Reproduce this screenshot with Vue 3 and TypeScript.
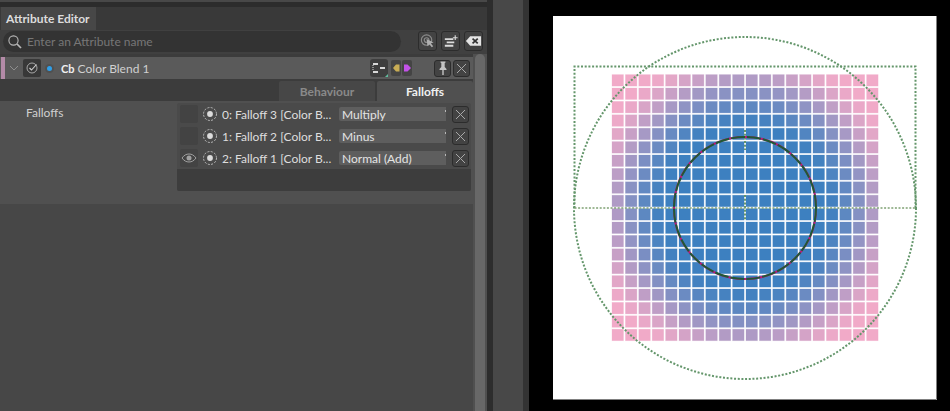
<script setup lang="ts">
interface FalloffRow {
  label: string;
  mode: string;
  visible: boolean;
}

const rows: FalloffRow[] = [
  { label: '0: Falloff 3 [Color B...', mode: 'Multiply', visible: false },
  { label: '1: Falloff 2 [Color B...', mode: 'Minus', visible: false },
  { label: '2: Falloff 1 [Color B...', mode: 'Normal (Add)', visible: true },
];

const CENTER_X = 745;
const CENTER_Y = 208;
const PITCH = 13.4;
const CELL = 11.5;
const ORIGIN_X = 612;
const ORIGIN_Y = 74.6;

const blue = [61, 128, 192];
const pink = [241, 170, 200];

function cellColor(d: number): string {
  const n = Math.min(1, Math.max(0, (d - 78) / 84));
  const t = n * n * (3 - 2 * n);
  const c = blue.map((b, i) => Math.round(b + (pink[i] - b) * t));
  return `rgb(${c[0]},${c[1]},${c[2]})`;
}

const cells: { x: number; y: number; fill: string }[] = [];
for (let r = 0; r < 20; r++) {
  for (let c = 0; c < 20; c++) {
    const x = ORIGIN_X + c * PITCH;
    const y = ORIGIN_Y + r * PITCH;
    const d = Math.hypot(x + CELL / 2 - CENTER_X, y + CELL / 2 - CENTER_Y);
    cells.push({ x, y, fill: cellColor(d) });
  }
}
</script>

<template>
  <div class="app">
    <section class="editor">
      <div class="topline"></div>
      <div class="topgap"></div>
      <div class="tabbar">
        <div class="tab">Attribute Editor</div>
      </div>
      <div class="searchrow">
        <div class="search">
          <svg class="search-icon" width="16" height="16" viewBox="0 0 16 16">
            <circle cx="6.5" cy="6.5" r="4.6" fill="none" stroke="#b8b8b8" stroke-width="1.1" />
            <path d="M10 10l4 4" stroke="#b8b8b8" stroke-width="1.7" />
          </svg>
          <span class="search-text">Enter an Attribute name</span>
        </div>
        <div class="search-buttons">
          <button class="btn btn-search">
            <svg width="18" height="18" viewBox="0 0 18 18">
              <circle cx="8" cy="8" r="5.5" fill="none" stroke="#8c8c8c" stroke-width="1.2" />
              <circle cx="8" cy="8" r="2.5" fill="none" stroke="#8c8c8c" stroke-width="1.2" />
              <path d="M8 7l7.5 3.5-3 1 2.500 3-1.500 1-2.500-3-2 2z" fill="#b0b0b0" />
            </svg>
          </button>
          <button class="btn btn-search">
            <svg width="18" height="18" viewBox="0 0 18 18">
              <path d="M3 6h9v2H3zM5 9.500h8v2H5zM3 13h9v2H3z" fill="#dcdcdc" />
              <path d="M14 3v5M11.500 5.500h5" stroke="#dcdcdc" stroke-width="1.200" />
            </svg>
          </button>
          <button class="btn btn-search">
            <svg width="18" height="18" viewBox="0 0 18 18">
              <path d="M5.500 4H17v10H5.500L1 9z" fill="#e4e4e4" />
              <path d="M8 6.500l5.500 5M13.500 6.500L8 11.500" stroke="#333" stroke-width="1.800" />
            </svg>
          </button>
        </div>
      </div>

      <div class="body">
        <div class="main">
          <div class="head">
            <header class="node">
              <span class="node-strip"></span>
              <svg class="chevron" width="10" height="6" viewBox="0 0 10 6">
                <path d="M1 1l4 4 4-4" fill="none" stroke="#8e8e8e" stroke-width="1" />
              </svg>
              <span class="check">
                <svg width="14" height="14" viewBox="0 0 14 14">
                  <circle cx="7" cy="7" r="5" fill="none" stroke="#a8a8a8" stroke-width="1" />
                  <path d="M4.500 7l2 2 5-5.500" fill="none" stroke="#d0d0d0" stroke-width="1.100" />
                </svg>
              </span>
              <span class="dot"></span>
              <span class="node-name"><b>Cb</b> Color Blend 1</span>
              <span class="node-tools">
                <span class="tool-graph">
                  <svg width="18" height="18" viewBox="0 0 18 18">
                    <path d="M3 4h5v2H3zM3 12h5v2H3zM10 8h5v2h-5z" fill="#d8d8d8" />
                    <path d="M3 6v6" stroke="#d8d8d8" stroke-width="1" stroke-dasharray="1 1" />
                    <path d="M18 15v3h-3z" fill="#5fbf9f" />
                  </svg>
                </span>
                <span class="tool-flow">
                  <svg width="10" height="16" viewBox="0 0 10 16">
                    <path d="M8.500 4.500v7H5L2 8l3-3.500z" fill="#c9ad55" />
                  </svg>
                </span>
                <span class="tool-flow">
                  <svg width="10" height="16" viewBox="0 0 10 16">
                    <path d="M2 4.500v7h3.500L9 8 5.500 4.500z" fill="#c252e8" />
                  </svg>
                </span>
              </span>
              <span class="node-actions">
                <button class="btn btn-small">
                  <svg width="14" height="16" viewBox="0 0 14 16">
                    <path d="M4.500 1.500h5v1l-.8.6V7l1.800 2v1h-7V9l1.800-2V3.100l-.8-.6z" fill="#c4c4c4" />
                    <path d="M7 10v5" stroke="#c4c4c4" stroke-width="1.400" />
                  </svg>
                </button>
                <button class="btn btn-small">
                  <svg width="11" height="11" viewBox="0 0 11 11">
                    <path d="M1 1l9 9M10 1l-9 9" stroke="#a8a8a8" stroke-width="1" />
                  </svg>
                </button>
              </span>
            </header>

            <nav class="tabs">
              <div class="pane-tab">Behaviour</div>
              <div class="pane-tab pane-tab--active">Falloffs</div>
            </nav>
          </div>

          <div class="props">
            <div class="prop-label">Falloffs</div>
            <div class="list">
              <div v-for="row in rows" :key="row.label" class="row">
                <span class="eye">
                  <svg v-if="row.visible" width="16" height="10" viewBox="0 0 16 10">
                    <path d="M1 5c2-2.800 4.300-4 7-4s5 1.200 7 4c-2 2.800-4.300 4-7 4S3 7.800 1 5z" fill="none" stroke="#a0a0a0" stroke-width="1" />
                    <circle cx="8" cy="5" r="2.500" fill="#a0a0a0" />
                  </svg>
                </span>
                <svg class="falloff-icon" width="16" height="16" viewBox="0 0 16 16">
                  <circle cx="8" cy="8" r="6.500" fill="none" stroke="#c4c4c4" stroke-width="0.900" stroke-dasharray="2 1.400" />
                  <circle cx="8" cy="8" r="2.900" fill="#dcdcdc" />
                </svg>
                <span class="row-label">{{ row.label }}</span>
                <span class="select">
                  {{ row.mode }}
                  <i class="select-arrow"></i>
                </span>
                <button class="btn btn-small btn-remove">
                  <svg width="11" height="11" viewBox="0 0 11 11">
                    <path d="M1 1l9 9M10 1l-9 9" stroke="#a8a8a8" stroke-width="1" />
                  </svg>
                </button>
              </div>
              <div class="list-empty"></div>
            </div>
          </div>
        </div>
        <div class="scroll">
          <div class="scroll-thumb"></div>
        </div>
      </div>
    </section>

    <div class="splitter"></div>
    <div class="middle"></div>
    <div class="edge"></div>

    <section class="viewport">
      <svg class="canvas" width="384" height="384" viewBox="553 16 384 384">
        <rect x="553" y="16" width="384" height="384" fill="#fff" />
        <path d="M936.500 16v383.500H553" fill="none" stroke="#808080" stroke-width="1" />
        <rect
          v-for="(cell, i) in cells"
          :key="i"
          :x="cell.x"
          :y="cell.y"
          :width="CELL"
          :height="CELL"
          :fill="cell.fill"
          :stroke="cell.fill"
          stroke-opacity="0.3"
          stroke-width="0.8"
        />
        <g fill="none" stroke="#64966b" stroke-width="2" stroke-dasharray="2 1.700">
          <circle cx="745" cy="208" r="171" />
          <path d="M574.500 208V66.500H915.500V208" />
          <path d="M745 130v20M745 195v26" />
        </g>
        <path d="M574.500 208H915.500" fill="none" stroke="#7fa173" stroke-width="1.600" stroke-dasharray="2 1.600" />
        <circle cx="745" cy="208" r="71" fill="none" stroke="#c0187a" stroke-width="2" />
        <circle cx="745" cy="208" r="71" fill="none" stroke="#1f5a35" stroke-width="2" stroke-dasharray="14 2" />
      </svg>
    </section>
  </div>
</template>

<style scoped>
.app {
  display: flex;
  width: 950px;
  height: 411px;
  overflow: hidden;
  font-family: Lato, "Open Sans", sans-serif;
  font-size: 12px;
  background: #000;
}

.editor {
  width: 487px;
  flex: none;
  display: flex;
  flex-direction: column;
  background: #3b3b3b;
}

.topline {
  height: 2px;
  background: #484848;
}

.topgap {
  height: 5px;
  background: #2c2c2c;
}

.tabbar {
  height: 23px;
  display: flex;
  padding-left: 1px;
  background: #393939;
}

.tab {
  width: 95px;
  display: flex;
  align-items: center;
  padding-left: 5px;
  box-sizing: border-box;
  background: #474747;
  color: #dcdcdc;
  font-weight: 700;
  font-size: 12px;
}

.searchrow {
  height: 24px;
  display: flex;
  padding: 1px 4px 2px 3px;
  box-sizing: border-box;
  background: #404040;
}

.search {
  width: 400px;
  height: 21px;
  display: flex;
  align-items: center;
  gap: 4px;
  padding-left: 4px;
  box-sizing: border-box;
  border-radius: 11px;
  background: #333;
  color: #777;
  font-size: 12px;
}

.search-buttons {
  display: flex;
  gap: 4px;
  margin-left: 17px;
}

.btn {
  display: flex;
  align-items: center;
  justify-content: center;
  padding: 0;
  box-sizing: border-box;
  border: 1px solid #2c2c2c;
  border-radius: 3px;
  background: #434343;
}

.btn-search {
  width: 19px;
  height: 20px;
}

.btn-small {
  width: 17px;
  height: 17px;
}

.body {
  flex: 1;
  display: flex;
  min-height: 0;
}

.main {
  width: 473px;
  flex: none;
  display: flex;
  flex-direction: column;
  background: #474747;
}

.head {
  padding-top: 3px;
  background: #3c3c3c;
}

.node {
  height: 22px;
  display: flex;
  align-items: center;
  background: #5a5a5a;
}

.node-strip {
  width: 4px;
  height: 22px;
  margin-left: 1px;
  background: #b48ba8;
}

.chevron {
  margin-left: 4px;
}

.check {
  width: 18px;
  height: 18px;
  margin-left: 4px;
  display: flex;
  align-items: center;
  justify-content: center;
  border-radius: 2px;
  background: #383838;
}

.dot {
  width: 5px;
  height: 5px;
  margin-left: 6px;
  border-radius: 50%;
  background: #2f9fe8;
  box-shadow: 0 0 0 2px #505050;
}

.node-name {
  margin-left: 9px;
  color: #d0d0d0;
  font-size: 12px;
}

.node-name b {
  color: #f0f0f0;
  font-size: 11px;
  font-weight: 700;
}

.node-tools {
  margin-left: auto;
  display: flex;
  align-items: center;
}

.tool-graph {
  width: 18px;
  height: 18px;
  margin-right: 3px;
  border-radius: 3px;
  background: #3e3e3e;
}

.tool-flow {
  width: 10px;
  height: 16px;
  margin-right: 1px;
  display: flex;
  border-radius: 2px;
  background: #444;
}

.node-actions {
  display: flex;
  gap: 2px;
  margin-left: 21px;
  margin-right: 3px;
}

.tabs {
  height: 20px;
  margin-top: 2px;
  display: flex;
  justify-content: flex-end;
  gap: 2px;
}

.pane-tab {
  width: 96px;
  display: flex;
  align-items: center;
  justify-content: center;
  border-radius: 2px 2px 0 0;
  background: #474747;
  color: #8a8a8a;
  font-weight: 700;
}

.pane-tab--active {
  background: #505050;
  color: #f0f0f0;
}

.props {
  height: 103px;
  display: flex;
  background: #505050;
  padding-top: 2px;
  box-sizing: border-box;
}

.prop-label {
  width: 177px;
  flex: none;
  padding: 2px 0 0 26px;
  box-sizing: border-box;
  color: #cfcfcf;
}

.list {
  width: 294px;
  height: 88px;
  display: flex;
  flex-direction: column;
  background: #4a4a4a;
  border-radius: 2px;
}

.row {
  height: 22px;
  flex: none;
  display: flex;
  align-items: center;
}

.eye {
  width: 18px;
  height: 18px;
  margin-left: 3px;
  display: flex;
  align-items: center;
  justify-content: center;
  border-radius: 2px;
  background: #434343;
}

.falloff-icon {
  margin-left: 4px;
}

.row-label {
  width: 117px;
  flex: none;
  margin-left: 4px;
  color: #dedede;
  white-space: nowrap;
  overflow: hidden;
}

.select {
  position: relative;
  width: 107px;
  height: 14px;
  flex: none;
  display: flex;
  align-items: center;
  padding-left: 3px;
  box-sizing: border-box;
  background: #5e5e5e;
  border-radius: 2px 0 0 2px;
  color: #e4e4e4;
}

.select-arrow {
  position: absolute;
  top: 3px;
  right: 0;
  width: 1px;
  height: 2px;
  background: #b8b8b8;
}

.btn-remove {
  margin-left: 6px;
}

.list-empty {
  flex: 1;
  background: #3d3d3d;
  border-radius: 0 0 2px 2px;
}

.scroll {
  flex: 1;
  padding: 0 2px 0 2px;
  background: #505050;
}

.scroll-thumb {
  height: 100%;
  border-radius: 5px 5px 0 0;
  background: #686868;
}

.splitter {
  width: 6px;
  flex: none;
  background: #2d2d2d;
}

.middle {
  width: 30px;
  flex: none;
  background: #484848;
}

.edge {
  width: 6px;
  flex: none;
  background: #333;
}

.viewport {
  flex: 1;
  padding: 16px 0 0 24px;
  background: #000;
}

.canvas {
  display: block;
}
</style>
